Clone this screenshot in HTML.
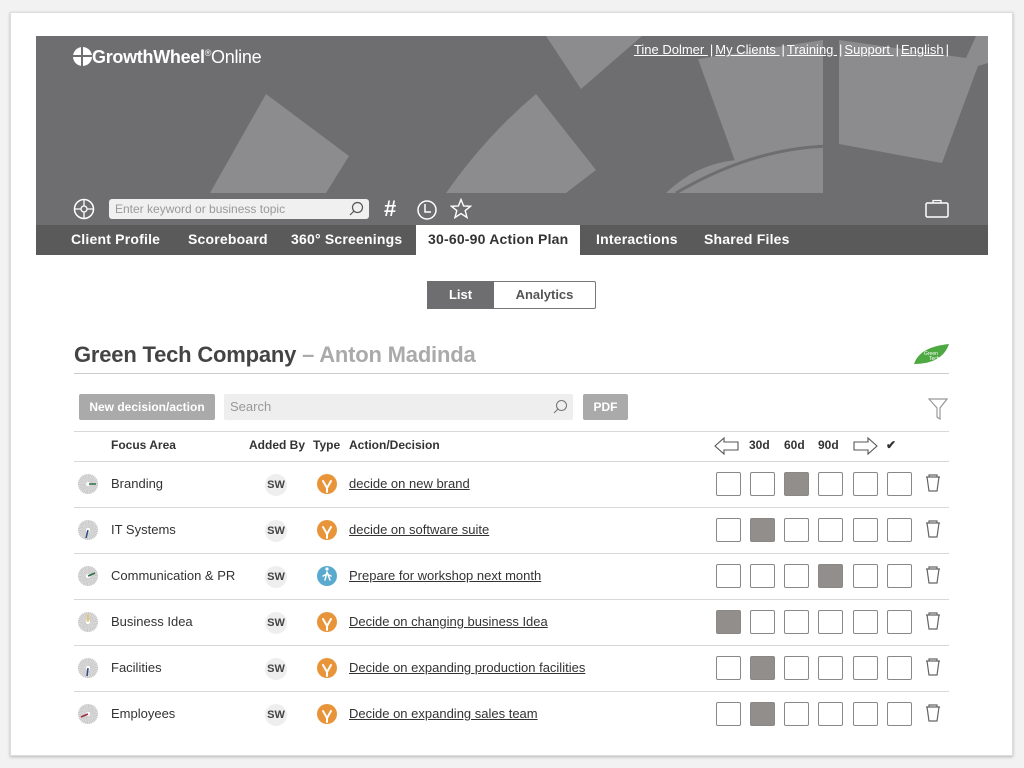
<!DOCTYPE html>
<html><head><meta charset="utf-8"><style>
*{margin:0;padding:0;box-sizing:border-box}
body{width:1024px;height:768px;background:#f2f2f2;font-family:"Liberation Sans",sans-serif;position:relative;overflow:hidden}
.frame{position:absolute;left:10px;top:12px;width:1003px;height:744px;background:#fff;border:1px solid #ddd;box-shadow:0 1px 3px rgba(0,0,0,.25)}
.a{position:absolute}
.hdr{left:36px;top:36px;width:952px;height:219px;background:#6e6d70;overflow:hidden}
.nav{left:36px;top:225px;width:952px;height:30px;background:#5a5a5b}
.nav span{position:absolute;top:6px;color:#fff;font-weight:bold;font-size:14px;letter-spacing:.2px}
.links{color:#fff;font-size:13px}
.links u{margin:0 2px}
.hl{position:absolute;left:74px;width:875px;height:1px;background:#d8d8d8}
.cb{position:absolute;width:25px;height:24px;border:1.5px solid #888;border-radius:2px;background:#fff}
.cb.f{background:#918e8b;border-color:#8a8784}
.sw{position:absolute;left:265px;width:22px;height:22px;border-radius:50%;background:#eee;font-size:11px;font-weight:bold;color:#444;text-align:center;line-height:22px}
.ty{position:absolute;left:317px;width:20px;height:20px;border-radius:50%;background:#e8953a}
.wh{position:absolute;left:78px;width:20px;height:20px;border-radius:50%;background:repeating-conic-gradient(#c8c8c8 0 6deg,#ddd 6deg 12deg)}
.wh:after{content:"";position:absolute;left:8px;top:8px;width:4px;height:4px;border-radius:50%;background:#fff}
.lk{position:absolute;left:349px;font-size:13px;color:#333;text-decoration:underline}
.fa{position:absolute;left:111px;font-size:13px;color:#333}
</style></head><body>
<div class="frame"></div>
<div class="a hdr">
<svg width="952" height="219" style="position:absolute;left:0;top:0">
<g fill="#8c8b8d">
<polygon points="230,58 313,120 290,157 174,157"/>
<path d="M410,157 Q450,100 500,58 L560,134 L530,157Z"/>
<polygon points="510,0 606,0 545,53"/>
<polygon points="662,23 787,4 787,113 699,125"/>
<path d="M630,157 Q660,128 700,124 L787,113 L787,157Z"/>
<polygon points="803,4 930,22 940,0 952,0 952,27 942,30 906,127 803,108"/>
</g>
<g fill="none" stroke="#6e6d70" stroke-width="3">
<path d="M640,157 Q720,110 800,110"/>
</g>
</svg>
<div class="a" style="left:37px;top:11px;color:#fff;font-size:18px;font-weight:bold;letter-spacing:-.3px"><span style="display:inline-block;width:19px;height:19px;border-radius:50%;background:#fff;vertical-align:-3px;position:relative"><i style="position:absolute;left:8px;top:0;width:2px;height:19px;background:#6e6d70"></i><i style="position:absolute;top:8px;left:0;height:2px;width:19px;background:#6e6d70"></i></span>GrowthWheel<sup style="font-size:9px;font-weight:normal">®</sup><span style="font-weight:normal">Online</span></div>
<svg class="a" style="left:37px;top:162px" width="22" height="22"><circle cx="11" cy="11" r="9.5" fill="none" stroke="#fff" stroke-width="1.5"/><circle cx="11" cy="11" r="3" fill="none" stroke="#fff" stroke-width="1.3"/><path d="M11 1.5V8M11 14V20.5M1.5 11H8M14 11H20.5" stroke="#fff" stroke-width="1.3"/></svg>
<div class="a" style="left:73px;top:163px;width:260px;height:20px;background:#f0f0f0;border-radius:3px;font-size:12px;color:#999;padding:3px 6px">Enter keyword or business topic</div>
<svg class="a" style="left:312px;top:165px" width="16" height="16"><circle cx="9.5" cy="6.5" r="5" fill="none" stroke="#555" stroke-width="1.2"/><path d="M6 10L2 14" stroke="#555" stroke-width="1.2"/></svg>
<div class="a" style="left:348px;top:160px;color:#fff;font-size:22px;font-weight:bold">#</div>
<svg class="a" style="left:380px;top:163px" width="22" height="22"><circle cx="11" cy="11" r="9" fill="none" stroke="#fff" stroke-width="1.5"/><path d="M9 5V13H15" fill="none" stroke="#fff" stroke-width="1.5"/></svg>
<svg class="a" style="left:414px;top:162px" width="22" height="22"><polygon points="11,1.5 13.6,8 20.5,8.3 15.2,12.6 17,19.5 11,15.6 5,19.5 6.8,12.6 1.5,8.3 8.4,8" fill="none" stroke="#fff" stroke-width="1.4"/></svg>
<svg class="a" style="left:889px;top:163px" width="24" height="20"><rect x="1" y="4" width="22" height="14" rx="1.5" fill="none" stroke="#fff" stroke-width="1.5"/><path d="M8 4V1.5H16V4" fill="none" stroke="#fff" stroke-width="1.3"/></svg>
</div>
<div class="a links" style="right:75px;top:42px"><u>Tine Dolmer </u>|<u>My Clients </u>|<u>Training </u>|<u>Support </u>|<u>English</u>|</div>
<div class="a nav">
<span style="left:35px">Client Profile</span>
<span style="left:152px">Scoreboard</span>
<span style="left:255px">360° Screenings</span>
<div style="position:absolute;left:380px;top:0;width:164px;height:30px;background:#fff"></div>
<span style="left:392px;color:#333">30-60-90 Action Plan</span>
<span style="left:560px">Interactions</span>
<span style="left:668px">Shared Files</span>
</div>
<div class="a" style="left:427px;top:281px;width:169px;height:28px;border:1px solid #777;border-radius:2px"></div>
<div class="a" style="left:427px;top:281px;width:67px;height:28px;background:#6e6d70;color:#fff;font-weight:bold;font-size:13px;text-align:center;line-height:28px">List</div>
<div class="a" style="left:494px;top:281px;width:101px;height:28px;color:#555;font-weight:bold;font-size:13px;text-align:center;line-height:28px">Analytics</div>
<div class="a" style="left:74px;top:342px;font-size:22px;font-weight:bold;color:#444;letter-spacing:-.2px">Green Tech Company <span style="color:#aaa">– Anton Madinda</span></div>
<svg class="a" style="left:912px;top:342px" width="38" height="24"><path d="M2 22C6 10 18 4 37 2C33 14 22 22 2 22Z" fill="#4fa943"/><text x="12" y="13" font-size="5" fill="#fff" font-family="Liberation Sans">Green</text><text x="17" y="18" font-size="5" fill="#fff" font-family="Liberation Sans">Tech</text></svg>
<div class="hl" style="top:373px;background:#ccc"></div>
<div class="a" style="left:79px;top:394px;width:136px;height:26px;background:#aaa;border-radius:2px;color:#fff;font-size:12px;font-weight:bold;text-align:center;line-height:26px">New decision/action</div>
<div class="a" style="left:224px;top:394px;width:349px;height:26px;background:#eee;border-radius:2px;color:#999;font-size:13px;padding:5px 6px">Search</div>
<svg class="a" style="left:552px;top:399px" width="16" height="16"><circle cx="9.5" cy="6.5" r="5" fill="none" stroke="#777" stroke-width="1.1"/><path d="M6 10L2 14" stroke="#777" stroke-width="1.1"/></svg>
<div class="a" style="left:583px;top:394px;width:45px;height:26px;background:#aaa;border-radius:2px;color:#fff;font-size:12px;font-weight:bold;text-align:center;line-height:26px">PDF</div>
<svg class="a" style="left:928px;top:398px" width="20" height="22"><path d="M1 1H19L12 10V21L9 19V10Z" fill="none" stroke="#999" stroke-width="1.2"/></svg>
<div class="hl" style="top:431px"></div>
<div class="a" style="top:438px;font-size:12px;font-weight:bold;color:#333">
<span class="a" style="left:111px;white-space:nowrap">Focus Area</span><span class="a" style="left:249px;white-space:nowrap">Added By</span><span class="a" style="left:313px">Type</span><span class="a" style="left:349px;white-space:nowrap">Action/Decision</span><span class="a" style="left:749px">30d</span><span class="a" style="left:784px">60d</span><span class="a" style="left:818px">90d</span><span class="a" style="left:886px">✔</span></div>
<svg class="a" style="left:714px;top:436px" width="26" height="20"><path d="M1 10L10 2V6H24V14H10V18Z" fill="none" stroke="#555" stroke-width="1.1"/></svg>
<svg class="a" style="left:852px;top:436px" width="26" height="20"><path d="M25 10L16 2V6H2V14H16V18Z" fill="none" stroke="#555" stroke-width="1.1"/></svg>
<div class="hl" style="top:461px"></div>

<div class="wh" style="top:474px"></div><div class="fa" style="top:476px">Branding</div><div class="sw" style="top:474px">SW</div><div class="ty" style="top:474px"></div><div class="lk" style="top:476px">decide on new brand</div>
<div class="hl" style="top:507px"></div>
<div class="wh" style="top:520px"></div><div class="fa" style="top:522px">IT Systems</div><div class="sw" style="top:520px">SW</div><div class="ty" style="top:520px"></div><div class="lk" style="top:522px">decide on software suite</div>
<div class="hl" style="top:553px"></div>
<div class="wh" style="top:566px"></div><div class="fa" style="top:568px">Communication &amp; PR</div><div class="sw" style="top:566px">SW</div><div class="ty" style="top:566px;background:#5aa9cf"></div><div class="lk" style="top:568px">Prepare for workshop next month</div>
<div class="hl" style="top:599px"></div>
<div class="wh" style="top:612px"></div><div class="fa" style="top:614px">Business Idea</div><div class="sw" style="top:612px">SW</div><div class="ty" style="top:612px"></div><div class="lk" style="top:614px">Decide on changing business Idea</div>
<div class="hl" style="top:645px"></div>
<div class="wh" style="top:658px"></div><div class="fa" style="top:660px">Facilities</div><div class="sw" style="top:658px">SW</div><div class="ty" style="top:658px"></div><div class="lk" style="top:660px">Decide on expanding production facilities</div>
<div class="hl" style="top:691px"></div>
<div class="wh" style="top:704px"></div><div class="fa" style="top:706px">Employees</div><div class="sw" style="top:704px">SW</div><div class="ty" style="top:704px"></div><div class="lk" style="top:706px">Decide on expanding sales team</div>

<svg class="a" style="left:0;top:0;pointer-events:none" width="1024" height="768">
<g fill="none" stroke="#fff" stroke-width="2" stroke-linecap="round">
<path d="M327 492V488M327 488L323 481M327 488L331 481"/><path d="M327 538V534M327 534L323 527M327 534L331 527"/>
<path d="M327 630V626M327 626L323 619M327 626L331 619"/><path d="M327 676V672M327 672L323 665M327 672L331 665"/>
<path d="M327 722V718M327 718L323 711M327 718L331 711"/>
<path d="M327 572L325 580M327 572L330 580M327 574L323 576M327 574L331 576" stroke-width="1.5"/>
</g>
<circle cx="327" cy="569" r="1.6" fill="#fff"/>
<g stroke-width="1.5"><path d="M89 484H96" stroke="#2f6e4a"/><path d="M88 530L86 538" stroke="#2a4b88"/><path d="M88 576L95 573" stroke="#2f6e4a"/><path d="M88 622L88 614" stroke="#e8c35a"/><path d="M88 668L87 676" stroke="#2a4b88"/><path d="M88 714L81 717" stroke="#9a3040"/></g>
<g fill="none" stroke="#666" stroke-width="1.2">
<path d="M926 477H940M929 477V475H937V477M927 477L929 491H937L939 477"/>
<path d="M926 523H940M929 523V521H937V523M927 523L929 537H937L939 523"/>
<path d="M926 569H940M929 569V567H937V569M927 569L929 583H937L939 569"/>
<path d="M926 615H940M929 615V613H937V615M927 615L929 629H937L939 615"/>
<path d="M926 661H940M929 661V659H937V661M927 661L929 675H937L939 661"/>
<path d="M926 707H940M929 707V705H937V707M927 707L929 721H937L939 707"/>
</g>
</svg>
<div class="cb" style="left:716px;top:472px"></div><div class="cb" style="left:750px;top:472px"></div><div class="cb f" style="left:784px;top:472px"></div><div class="cb" style="left:818px;top:472px"></div><div class="cb" style="left:853px;top:472px"></div><div class="cb" style="left:887px;top:472px"></div>
<div class="cb" style="left:716px;top:518px"></div><div class="cb f" style="left:750px;top:518px"></div><div class="cb" style="left:784px;top:518px"></div><div class="cb" style="left:818px;top:518px"></div><div class="cb" style="left:853px;top:518px"></div><div class="cb" style="left:887px;top:518px"></div>
<div class="cb" style="left:716px;top:564px"></div><div class="cb" style="left:750px;top:564px"></div><div class="cb" style="left:784px;top:564px"></div><div class="cb f" style="left:818px;top:564px"></div><div class="cb" style="left:853px;top:564px"></div><div class="cb" style="left:887px;top:564px"></div>
<div class="cb f" style="left:716px;top:610px"></div><div class="cb" style="left:750px;top:610px"></div><div class="cb" style="left:784px;top:610px"></div><div class="cb" style="left:818px;top:610px"></div><div class="cb" style="left:853px;top:610px"></div><div class="cb" style="left:887px;top:610px"></div>
<div class="cb" style="left:716px;top:656px"></div><div class="cb f" style="left:750px;top:656px"></div><div class="cb" style="left:784px;top:656px"></div><div class="cb" style="left:818px;top:656px"></div><div class="cb" style="left:853px;top:656px"></div><div class="cb" style="left:887px;top:656px"></div>
<div class="cb" style="left:716px;top:702px"></div><div class="cb f" style="left:750px;top:702px"></div><div class="cb" style="left:784px;top:702px"></div><div class="cb" style="left:818px;top:702px"></div><div class="cb" style="left:853px;top:702px"></div><div class="cb" style="left:887px;top:702px"></div>
</body></html>
